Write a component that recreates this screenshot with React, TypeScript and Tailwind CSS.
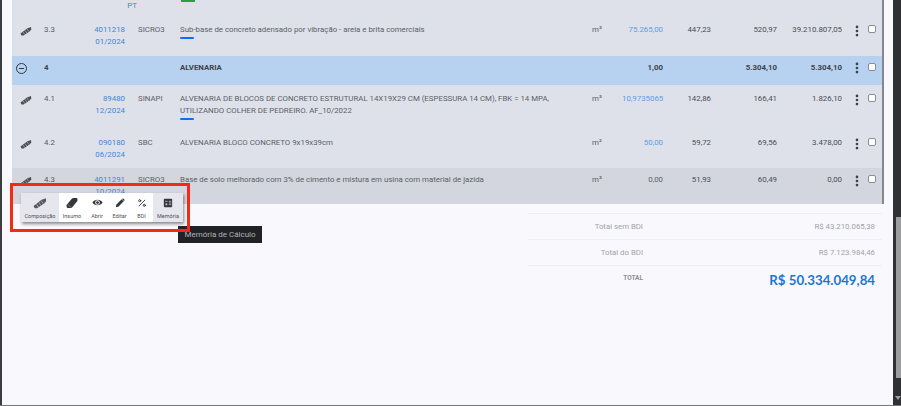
import { MoreVertical, Percent } from 'lucide-react';

type Row = {
  id: string;
  code: string[];
  base: string;
  desc: string[];
  unit: string;
  qty: string;
  qtyLink?: boolean;
  cost: string;
  price: string;
  total: string;
  bar?: boolean;
  height: string;
  tone: string;
  pad: string;
};

const rows: Row[] = [
  {
    id: '3.3',
    code: ['4011218', '01/2024'],
    base: 'SICRO3',
    desc: ['Sub-base de concreto adensado por vibração - areia e brita comerciais'],
    unit: 'm³',
    qty: '75.265,00',
    qtyLink: true,
    cost: '447,23',
    price: '520,97',
    total: '39.210.807,05',
    bar: true,
    height: 'h-[39px]',
    tone: 'bg-[#dee1ea]',
    pad: 'pt-[7px]',
  },
  {
    id: '4.1',
    code: ['89480', '12/2024'],
    base: 'SINAPI',
    desc: [
      'ALVENARIA DE BLOCOS DE CONCRETO ESTRUTURAL 14X19X29 CM (ESPESSURA 14 CM), FBK = 14 MPA,',
      'UTILIZANDO COLHER DE PEDREIRO. AF_10/2022',
    ],
    unit: 'm³',
    qty: '10,9735065',
    qtyLink: true,
    cost: '142,86',
    price: '166,41',
    total: '1.826,10',
    bar: true,
    height: 'h-[45px]',
    tone: 'bg-[#dee1ea]',
    pad: 'pt-[8px]',
  },
  {
    id: '4.2',
    code: ['090180', '06/2024'],
    base: 'SBC',
    desc: ['ALVENARIA BLOCO CONCRETO 9x19x39cm'],
    unit: 'm²',
    qty: '50,00',
    qtyLink: true,
    cost: '59,72',
    price: '69,56',
    total: '3.478,00',
    height: 'h-[38px]',
    tone: 'bg-[#dee1ea]',
    pad: 'pt-[7px]',
  },
  {
    id: '4.3',
    code: ['4011291', '10/2024'],
    base: 'SICRO3',
    desc: ['Base de solo melhorado com 3% de cimento e mistura em usina com material de jazida'],
    unit: 'm³',
    qty: '0,00',
    cost: '51,93',
    price: '60,49',
    total: '0,00',
    height: 'h-[36px]',
    tone: 'bg-[#d3d6de]',
    pad: 'pt-[6px]',
  },
];

function Trowel({ className }: { className?: string }) {
  return (
    <svg viewBox="0 0 24 24" className={className} fill="currentColor">
      <path d="M1 17 L14 7 L22 4 L22.5 9 L19 13 L7 21 L3 21 Z" />
      <path d="M6 14 L9.5 19 M10 11 L13.5 16 M14 8 L17.5 13" stroke="#dee1ea" strokeWidth="1" />
    </svg>
  );
}

function Eraser({ className }: { className?: string }) {
  return (
    <svg viewBox="0 0 24 24" className={className} fill="currentColor">
      <path d="M1 16 L12 3 Q13 2 15 2 L22 2 Q23 3 23 6 Q23 8 22 9 L12 21 Q11 22 9 22 L3 22 Q1 21 1 18 Z" />
      <path d="M4 15 L10 21" stroke="#ffffff" strokeWidth="0.8" />
    </svg>
  );
}

function EyeFilled({ className }: { className?: string }) {
  return (
    <svg viewBox="0 0 24 24" className={className}>
      <path d="M1 12 C5 4 19 4 23 12 C19 20 5 20 1 12 Z" fill="currentColor" />
      <circle cx="12" cy="12" r="5" fill="#ffffff" />
      <circle cx="12" cy="12" r="3" fill="currentColor" />
    </svg>
  );
}

function PencilFilled({ className }: { className?: string }) {
  return (
    <svg viewBox="0 0 24 24" className={className} fill="currentColor">
      <path d="M2 22 L3 16 L16 3 L21 8 L8 21 Z" />
      <path d="M17.5 1.5 Q19 0.5 20.5 1.5 L22.5 3.5 Q23.5 5 22.5 6.5 L21.5 7 L17 2.5 Z" />
    </svg>
  );
}

function Calc({ className }: { className?: string }) {
  return (
    <svg viewBox="0 0 24 24" className={className}>
      <rect x="2" y="2" width="20" height="20" rx="2" fill="currentColor" />
      <path d="M5 8h6M14 8h6M14 12h6M14 16h6M5 15h6M8 12v6" stroke="#e6e7ee" strokeWidth="1.5" />
    </svg>
  );
}

function Dots() {
  return <MoreVertical className="w-[14px] h-[14px] text-[#3c3f44]" strokeWidth={2.6} />;
}

function Box() {
  return <span className="block w-[8px] h-[8px] mt-[1px] rounded-[2px] border border-[#8a8d94] bg-white" />;
}

function TableRow({ row }: { row: Row }) {
  return (
    <div className={`flex items-start text-[7.85px] leading-[12px] text-[#5c5f66] ${row.pad} ${row.height} ${row.tone}`}>
      <div className="w-[32px] flex justify-start pl-[8px]">
        <Trowel className="w-[12px] h-[12px] mt-[1px] text-[#4c4e53]" />
      </div>
      <div className="w-[34px] text-[#55585e]">{row.id}</div>
      <div className="w-[47px] text-right text-[#3f86d4]">
        {row.code.map((line) => <div key={line}>{line}</div>)}
      </div>
      <div className="w-[55px] pl-[13px]">{row.base}</div>
      <div className="w-[412px] whitespace-nowrap">
        {row.desc.map((line) => <div key={line}>{line}</div>)}
        {row.bar && <div className="w-[14px] h-[2px] mt-[1px] rounded-sm bg-[#0d6efd]" />}
      </div>
      <div className="w-[30px]">{row.unit}</div>
      <div className={`w-[41px] text-right ${row.qtyLink ? 'text-[#5b9ee0]' : ''}`}>{row.qty}</div>
      <div className="w-[48px] text-right text-[#4a4d52]">{row.cost}</div>
      <div className="w-[66px] text-right text-[#4a4d52]">{row.price}</div>
      <div className="w-[65px] text-right text-[#4a4d52]">{row.total}</div>
      <div className="w-[22px] flex justify-end"><Dots /></div>
      <div className="w-[17px] flex justify-end pr-[5px]"><Box /></div>
    </div>
  );
}

function ToolItem({
  label,
  icon,
  width,
}: {
  label: string;
  icon: React.ReactNode;
  width: string;
}) {
  return (
    <div className={`flex flex-col items-center h-[29px] pt-[3px] ${width}`}>
      <div className="h-[13px] flex items-center text-[#33363b]">{icon}</div>
      <div className="mt-[3px] text-[5.5px] leading-[8px] text-[#4d5056] whitespace-nowrap">{label}</div>
    </div>
  );
}

function Totals() {
  return (
    <div className="ml-[516px] w-[354px] mt-[9px] text-[7.8px] text-[#a0a2a8]">
      <div className="flex items-center h-[26px] pr-[7px] border-t border-[#eeeef3]">
        <div className="w-[115px] text-right">Total sem BDI</div>
        <div className="flex-1 text-right">R$ 43.210.065,38</div>
      </div>
      <div className="flex items-center h-[26px] pr-[7px] border-t border-[#eeeef3]">
        <div className="w-[115px] text-right">Total do BDI</div>
        <div className="flex-1 text-right">R$ 7.123.984,46</div>
      </div>
      <div className="flex items-center h-[30px] pr-[7px] border-t border-[#eeeef3]">
        <div className="w-[115px] text-right text-[6.5px] font-bold text-[#8c8e94] -mt-[4px]">TOTAL</div>
        <div className="flex-1 text-right text-[13.25px] font-bold text-[#1976d2] font-['Lato',sans-serif]">
          R$ 50.334.049,84
        </div>
      </div>
    </div>
  );
}

export default function App() {
  return (
    <div className="relative flex w-[901px] h-[406px] overflow-hidden bg-[#f9f9fd] font-['Roboto',sans-serif]">
      <div className="w-[2px] bg-[#3c3d41]" />

      <div className="flex-1 pl-[10px]">
        <div className="w-[872px] border-r-2 border-[#85878d]">
          <div className="relative h-[17px] bg-[#dee1ea]">
            <div className="absolute left-[104px] top-[1px] w-[21px] text-right text-[7.85px] leading-[10px] text-[#3f86d4]">PT</div>
            <div className="absolute left-[169px] top-0 w-[14px] h-[2px] bg-[#2e9e44]" />
          </div>
          <TableRow row={rows[0]} />
          <div className="flex items-center h-[29px] pb-[6px] bg-[#b7d1f0] text-[7.85px] font-bold text-[#3f4349]">
            <div className="w-[32px] flex justify-start pl-[4px]">
              <span className="flex items-center justify-center w-[11px] h-[11px] mt-[1px] rounded-full border border-[#33363b]">
                <span className="w-[5px] h-[1px] bg-[#33363b]" />
              </span>
            </div>
            <div className="w-[136px]">4</div>
            <div className="w-[412px] whitespace-nowrap">ALVENARIA</div>
            <div className="w-[30px]" />
            <div className="w-[41px] text-right">1,00</div>
            <div className="w-[48px]" />
            <div className="w-[66px] text-right">5.304,10</div>
            <div className="w-[65px] text-right">5.304,10</div>
            <div className="w-[22px] flex justify-end"><Dots /></div>
            <div className="w-[17px] flex justify-end pr-[5px] -mt-[2px]"><Box /></div>
          </div>
          <TableRow row={rows[1]} />
          <TableRow row={rows[2]} />
          <TableRow row={rows[3]} />
        </div>

        <Totals />
      </div>

      <div className="w-[8px] bg-[#2f3033] flex flex-col items-end">
        <div className="mt-[217px] w-[5px] h-[161px] bg-[#9c9d9f]" />
        <div className="mt-[18px] w-0 h-0 border-x-[3px] border-x-transparent border-t-[4px] border-t-[#9c9d9f]" />
      </div>

      <div className="absolute left-0 right-0 bottom-0 h-[1px] bg-[#77787c]" />

      {/* floating toolbar with the red highlight around it */}
      <div className="absolute left-[21px] top-[193px] flex bg-[#e6e7ee] shadow-[1px_2px_3px_rgba(0,0,0,0.45)]">
        <ToolItem width="w-[38px]" label="Composição" icon={<Trowel className="w-[14px] h-[14px] text-[#55585e]" />} />
        <div className="flex bg-white">
          <ToolItem width="w-[26px]" label="Insumo" icon={<Eraser className="w-[12px] h-[12px]" />} />
          <ToolItem width="w-[24px]" label="Abrir" icon={<EyeFilled className="w-[11px] h-[11px]" />} />
          <ToolItem width="w-[21px]" label="Editar" icon={<PencilFilled className="w-[10px] h-[10px]" />} />
          <ToolItem width="w-[23px]" label="BDI" icon={<Percent className="w-[10px] h-[10px]" strokeWidth={2.2} />} />
        </div>
        <ToolItem width="w-[30px]" label="Memória" icon={<Calc className="w-[10px] h-[10px]" />} />
      </div>
      <div className="absolute left-[178px] top-[226px] w-[84px] h-[17px] flex items-center justify-center bg-[#212225] text-[8px] text-[#b0b1b5] whitespace-nowrap">
        Memória de Cálculo
      </div>
      <div className="absolute left-[10px] top-[183px] w-[180px] h-[49px] border-[3px] border-[#f42a12]" />
    </div>
  );
}
